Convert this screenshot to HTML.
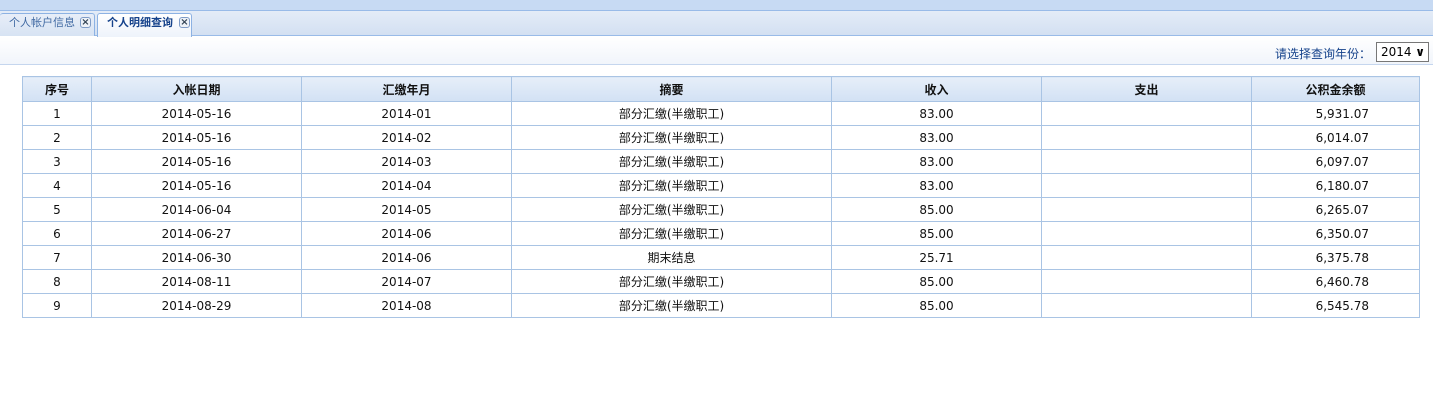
<!DOCTYPE html>
<html><head><meta charset="utf-8"><style>
*{margin:0;padding:0;box-sizing:border-box}
body{width:1433px;height:400px;background:#fff;font-family:"Liberation Sans","Noto Sans CJK SC",sans-serif;font-size:12px;color:#000;position:relative;overflow:hidden}
.top{position:absolute;left:0;top:0;width:1433px;height:11px;background:#c7daf3;border-bottom:1px solid #99bbe8}
.bar{position:absolute;left:0;top:11px;width:1433px;height:25px;background:linear-gradient(#e4ecf7,#d3e0f2);border-bottom:1px solid #99bbe8}
.tab{position:absolute;top:2px;height:23px;border:1px solid #8db2e3;border-bottom:none;border-radius:3px 3px 0 0;font-size:11px;line-height:18px;padding-left:9px}
.t1{left:0;width:95px;background:linear-gradient(#e8eef8,#d7e3f3);color:#416aa3;border-left:none}
.t2{left:97px;width:95px;background:linear-gradient(#fff,#eef3fb);color:#15428b;font-weight:bold;height:24px}
.x{position:absolute;top:3px;width:11px;height:11px;border:1px solid #7f9cc7;border-radius:3px;font-size:10px;line-height:9px;text-align:center;color:#345;font-weight:bold;background:#eef2f8;font-family:"DejaVu Sans",sans-serif}
.sub{position:absolute;left:0;top:37px;width:1433px;height:28px;background:linear-gradient(#fff,#f1f5fb);border-bottom:1px solid #c5d6ee}
.lbl{position:absolute;left:1275px;top:45px;color:#15428b;font-size:12px}
.sel{position:absolute;left:1376px;top:42px;width:53px;height:20px;border:1px solid #777;background:#fff;font-family:"DejaVu Sans",sans-serif;font-size:12px;line-height:18px;padding-left:4px}
table{position:absolute;left:22px;top:76px;border-collapse:collapse;width:1398px}
td,th{border:1px solid #a9c4e4;height:24px;text-align:center;font-size:12px;color:#111}
td{font-family:"DejaVu Sans","Noto Sans CJK SC",sans-serif}
th{background:linear-gradient(#e6eef9,#d2e1f4);font-weight:bold;height:25px}
td.r{text-align:right;padding-right:50px}
</style></head><body>
<div class="top"></div>
<div class="bar">
<div class="tab t1">个人帐户信息<span class="x" style="left:80px">×</span></div>
<div class="tab t2">个人明细查询<span class="x" style="left:81px">×</span></div>
</div>
<div class="sub"></div>
<div class="lbl">请选择查询年份：</div>
<div class="sel">2014 <span style="position:absolute;right:3px;top:0;font-weight:bold">∨</span></div>
<table>
<tr><th style="width:69px">序号</th><th style="width:210px">入帐日期</th><th style="width:210px">汇缴年月</th><th style="width:320px">摘要</th><th style="width:210px">收入</th><th style="width:210px">支出</th><th>公积金余额</th></tr>
<tr><td>1</td><td>2014-05-16</td><td>2014-01</td><td>部分汇缴(半缴职工)</td><td>83.00</td><td></td><td class="r">5,931.07</td></tr>
<tr><td>2</td><td>2014-05-16</td><td>2014-02</td><td>部分汇缴(半缴职工)</td><td>83.00</td><td></td><td class="r">6,014.07</td></tr>
<tr><td>3</td><td>2014-05-16</td><td>2014-03</td><td>部分汇缴(半缴职工)</td><td>83.00</td><td></td><td class="r">6,097.07</td></tr>
<tr><td>4</td><td>2014-05-16</td><td>2014-04</td><td>部分汇缴(半缴职工)</td><td>83.00</td><td></td><td class="r">6,180.07</td></tr>
<tr><td>5</td><td>2014-06-04</td><td>2014-05</td><td>部分汇缴(半缴职工)</td><td>85.00</td><td></td><td class="r">6,265.07</td></tr>
<tr><td>6</td><td>2014-06-27</td><td>2014-06</td><td>部分汇缴(半缴职工)</td><td>85.00</td><td></td><td class="r">6,350.07</td></tr>
<tr><td>7</td><td>2014-06-30</td><td>2014-06</td><td>期末结息</td><td>25.71</td><td></td><td class="r">6,375.78</td></tr>
<tr><td>8</td><td>2014-08-11</td><td>2014-07</td><td>部分汇缴(半缴职工)</td><td>85.00</td><td></td><td class="r">6,460.78</td></tr>
<tr><td>9</td><td>2014-08-29</td><td>2014-08</td><td>部分汇缴(半缴职工)</td><td>85.00</td><td></td><td class="r">6,545.78</td></tr>
</table>
</body></html>
